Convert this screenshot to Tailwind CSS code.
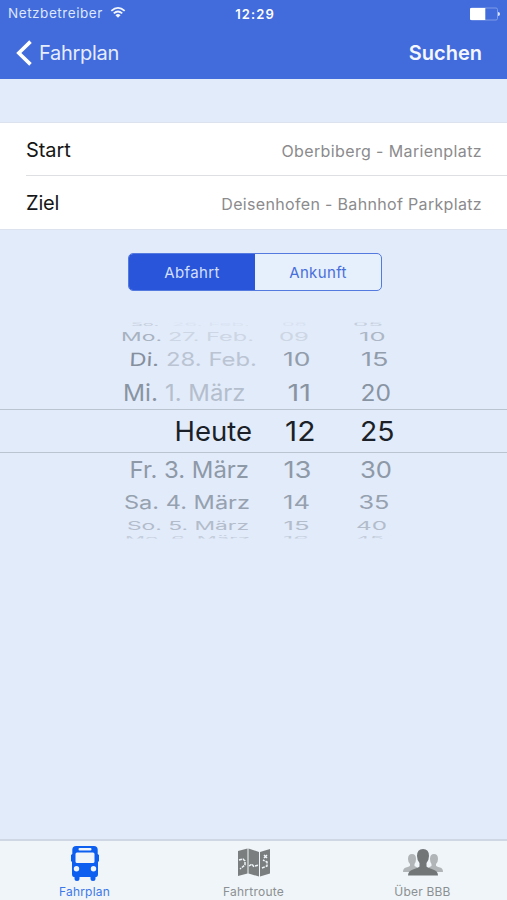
<!DOCTYPE html>
<html lang="de">
<head>
<meta charset="utf-8">
<title>Fahrplan</title>
<script src="https://cdn.jsdelivr.net/npm/@tailwindcss/browser@4"></script>
</head>
<body class="w-[507px] h-[900px] overflow-hidden bg-[#e2ebfa] font-['Inter','Liberation_Sans',sans-serif]">
<div class="flex h-[900px] flex-col">
  <header class="h-[79px] shrink-0 bg-[#426bdc] text-white">
    <div class="grid h-[28px] grid-cols-3 items-center pl-[8px] pr-[7px] text-[13px] leading-none text-[#dde6fa]">
      <div class="flex items-center gap-[7px]">
        <span class="whitespace-nowrap text-[13.5px] tracking-[0.55px]">Netzbetreiber</span>
        <svg class="-mt-[3px] shrink-0" width="16" height="13" viewBox="0 0 17 13" fill="none" stroke="#f2f6ff" stroke-width="1.9"><path d="M1.4 4.8Q8.5-1.6 15.6 4.8M4 7.5Q8.5 3.4 13 7.5"/><path d="M8.5 12 5.8 9.3Q8.5 7 11.2 9.3Z" fill="#f2f6ff" stroke="none"/></svg>
      </div>
      <div class="pl-[2px] text-center font-semibold tracking-[1.1px] text-white">12:29</div>
      <svg class="-mt-[1px] justify-self-end" width="30" height="14" viewBox="0 0 30 14"><rect x=".5" y="1" width="27" height="12" rx="1.5" fill="none" stroke="#7f9ce8"/><path d="M0 1.8Q0 1 1 1H15.3V13H1Q0 13 0 12Z" fill="#fff"/><path d="M28 5Q30 5 30 7T28 9Z" fill="#dce6ff"/></svg>
    </div>
    <div class="flex h-[49px] items-center justify-between pl-[16px] pr-[25px] text-[20px] leading-none">
      <div class="flex items-center gap-[7px]">
        <svg width="16" height="26" viewBox="0 0 16 26" fill="none" stroke="#fff" stroke-width="3.6"><path d="M14.5 1.6 2.8 13 14.5 24.4"/></svg>
        <span class="tracking-[-0.3px] text-[#e6edfd]">Fahrplan</span>
      </div>
      <span class="font-semibold tracking-[0px] text-[#f4f7ff]">Suchen</span>
    </div>
  </header>

  <main class="flex flex-1 flex-col">
    <section class="mt-[43px] h-[108px] border-y border-[#dce3ee] bg-white pl-[26px]">
      <div class="flex h-[53px] items-center justify-between border-b border-[#dedfe3] pr-[25px]">
        <span class="pt-[1px] text-[20px] tracking-[-0.05px] text-[#161616]">Start</span>
        <span class="pt-[3px] text-[16px] tracking-[0.38px] text-[#8b8b8d]">Oberbiberg - Marienplatz</span>
      </div>
      <div class="flex h-[53px] items-center justify-between pr-[25px]">
        <span class="pt-[1px] text-[20px] tracking-[-0.2px] text-[#161616]">Ziel</span>
        <span class="pt-[3px] text-[16px] tracking-[0.33px] text-[#8b8b8d]">Deisenhofen - Bahnhof Parkplatz</span>
      </div>
    </section>

    <div class="ml-[128px] mt-[23px] grid h-[38px] w-[254px] grid-cols-2 overflow-hidden rounded-[5px] border border-[#5479df] bg-[#e6effc] text-center text-[15px] leading-[37px] tracking-[0.35px]">
      <span class="bg-[#2855da] text-[#d3dffb]">Abfahrt</span>
      <span class="text-[#4870da]">Ankunft</span>
    </div>

    <svg class="mt-[19px] block" width="507" height="240" viewBox="0 310 507 240" font-size="27" fill="#8c97a5">
      <defs>
        <clipPath id="wheelTop"><rect x="0" y="322.5" width="507" height="8"/></clipPath>
        <clipPath id="wheelBottom"><rect x="0" y="530" width="507" height="8.5"/></clipPath>
      </defs>
      <g clip-path="url(#wheelTop)" fill="#c5cfdd">
        <text transform="translate(131 325.5) scale(1 .2)" textLength="28" lengthAdjust="spacingAndGlyphs">So.</text>
        <text transform="translate(172 325.5) scale(1 .2)" textLength="78" lengthAdjust="spacingAndGlyphs" opacity=".3">26. Feb.</text>
        <text transform="translate(282 325.5) scale(1 .2)" textLength="25" lengthAdjust="spacingAndGlyphs" opacity=".35">08</text>
        <text transform="translate(353 326) scale(1 .2)" textLength="30" lengthAdjust="spacingAndGlyphs">05</text>
      </g>
      <g fill="#cdd6e4">
        <text transform="translate(121 340.5) scale(1 .41)" textLength="41" lengthAdjust="spacingAndGlyphs" fill="#a8b2c0">Mo.</text>
        <text transform="translate(168 340.5) scale(1 .41)" textLength="86" lengthAdjust="spacingAndGlyphs">27. Feb.</text>
        <text transform="translate(279 340.5) scale(1 .41)" textLength="30" lengthAdjust="spacingAndGlyphs">09</text>
        <text transform="translate(359 340.5) scale(1 .41)" textLength="26.500" lengthAdjust="spacingAndGlyphs" fill="#adb7c5">10</text>
      </g>
      <g fill="#929dab">
        <text transform="translate(129 366) skewX(-3) scale(1 .68)" textLength="30" lengthAdjust="spacingAndGlyphs" fill="#858f9d">Di.</text>
        <text transform="translate(166 366) scale(1 .68)" textLength="91" lengthAdjust="spacingAndGlyphs" fill="#bac4d2">28. Feb.</text>
        <text transform="translate(283 366) scale(1 .68)" textLength="27.500" lengthAdjust="spacingAndGlyphs">10</text>
        <text transform="translate(361 366) scale(1 .68)" textLength="27.500" lengthAdjust="spacingAndGlyphs">15</text>
      </g>
      <g fill="#8994a2">
        <text transform="translate(123 401) scale(1 .84)" textLength="35" lengthAdjust="spacingAndGlyphs">Mi.</text>
        <text transform="translate(165 401) scale(1 .84)" textLength="80.500" lengthAdjust="spacingAndGlyphs" fill="#b4becc">1. März</text>
        <text transform="translate(287.500 401) scale(1 .84)" textLength="23.500" lengthAdjust="spacingAndGlyphs">11</text>
        <text transform="translate(360.5 401) scale(1 .84)" textLength="30.500" lengthAdjust="spacingAndGlyphs">20</text>
      </g>
      <path d="M0 409.5H507M0 452.5H507" stroke="#bac3d0"/>
      <g fill="#1a1f28">
        <text transform="translate(174.5 440.5)" textLength="77.500" lengthAdjust="spacingAndGlyphs">Heute</text>
        <text transform="translate(285 440.5)" textLength="30.500" lengthAdjust="spacingAndGlyphs">12</text>
        <text transform="translate(360 440.5)" textLength="34.500" lengthAdjust="spacingAndGlyphs">25</text>
      </g>
      <g fill="#8e99a7">
        <text transform="translate(129.500 478) scale(1 .86)" textLength="119.500" lengthAdjust="spacingAndGlyphs">Fr. 3. März</text>
        <text transform="translate(283.500 478) scale(1 .86)" textLength="28" lengthAdjust="spacingAndGlyphs">13</text>
        <text transform="translate(360 478) scale(1 .86)" textLength="32" lengthAdjust="spacingAndGlyphs">30</text>
      </g>
      <g fill="#96a1af">
        <text transform="translate(124 509) scale(1 .68)" textLength="126" lengthAdjust="spacingAndGlyphs">Sa. 4. März</text>
        <text transform="translate(283 509) scale(1 .68)" textLength="27" lengthAdjust="spacingAndGlyphs">14</text>
        <text transform="translate(358.500 509) scale(1 .68)" textLength="31" lengthAdjust="spacingAndGlyphs">35</text>
      </g>
      <g fill="#b2bcca">
        <text transform="translate(127 529.7) scale(1 .42)" textLength="122" lengthAdjust="spacingAndGlyphs">So. 5. März</text>
        <text transform="translate(283.500 529.700) scale(1 .42)" textLength="26" lengthAdjust="spacingAndGlyphs">15</text>
        <text transform="translate(356 529.700) scale(1 .42)" textLength="31" lengthAdjust="spacingAndGlyphs">40</text>
      </g>
      <g fill="#c3cddb" clip-path="url(#wheelBottom)">
        <text transform="translate(125 540.5) scale(1 .22)" textLength="125" lengthAdjust="spacingAndGlyphs">Mo. 6. März</text>
        <text transform="translate(283 540.5) scale(1 .22)" textLength="26" lengthAdjust="spacingAndGlyphs">16</text>
        <text transform="translate(355 540.5) scale(1 .22)" textLength="29" lengthAdjust="spacingAndGlyphs">45</text>
      </g>
    </svg>
  </main>

  <nav class="grid h-[61px] shrink-0 grid-cols-3 border-t-2 border-[#cfd7e5] bg-[#eff5f8] text-center text-[12px] leading-[14px] text-[#8c9092]">
    <div class="flex flex-col items-center pt-[5px] text-[#3d78ea]">
      <svg width="28" height="35" viewBox="0 0 28 35"><path fill="#0d5ff0" fill-rule="evenodd" d="M5 0H23Q26.500 0 26.700 3.500V8L28 9V15L27 16V28Q27 31 25 31H24.500V32.500Q24.500 35 22 35T19.500 32.500V31H8.500V32.500Q8.500 35 6 35T3.500 32.500V31H3Q1 31 1 28V16L0 15V9L1.300 8V3.500Q1.500 0 5 0ZM8.500 2Q7.500 2 7.500 3.200T8.500 4.400H19.500Q20.500 4.400 20.500 3.200T19.500 2ZM6 6.500Q4.500 6.500 4.500 8V15.500Q4.500 17 6 17H22Q23.500 17 23.500 15.500V8Q23.500 6.500 22 6.500ZM5.500 20A2.700 2.700 0 1 0 5.500 25.400 2.700 2.700 0 1 0 5.500 20ZM22.500 20A2.700 2.700 0 1 0 22.500 25.400 2.700 2.700 0 1 0 22.500 20Z"/></svg>
      <span class="mt-[4px] tracking-[0.2px]">Fahrplan</span>
    </div>
    <div class="flex flex-col items-center pt-[7px]">
      <svg width="34" height="30" viewBox="0 0 34 30"><path fill="#7b7e7f" d="M1 3 10.500 .5V25.500L1 28ZM11.500 .5 22 4V28.500L11.500 25.500ZM23 4 33 1V25.500L23 28.500Z"/><g fill="none" stroke="#eff5f8" stroke-width="1.500"><path d="M2 12 6 11 8 13 8 17 3 21M12 18 15 16 17 19M18 18 22 17M25 20 30 18V14L26 12" stroke-dasharray="3 1"/><path d="M27 7 30 10M30 7 27 10"/></g></svg>
      <span class="mt-[7px] tracking-[0.25px]">Fahrtroute</span>
    </div>
    <div class="flex flex-col items-center pt-[7px]">
      <svg width="40" height="30" viewBox="0 0 40 30"><path fill="#b1b5b7" d="M9 6Q13 6 13 11 13 14 11.500 16V18Q17 20 17 24H0Q0 20 3 19.500 7 18.500 7 17.500V16Q5 14 5 11 5 6 9 6Z"/><path fill="#b1b5b7" d="M31 6Q27 6 27 11 27 14 28.500 16V18Q23 20 23 24H40Q40 20 37 19.500 33 18.500 33 17.500V16Q35 14 35 11 35 6 31 6Z"/><path fill="#737677" d="M20 1Q26 1 26 8 26 12 23.500 15V18.500Q24 19.500 30 21.500 35 23 35 27.500H5Q5 23 10 21.500 16 19.500 16.500 18.500V15Q14 12 14 8 14 1 20 1Z"/></svg>
      <span class="mt-[7px] tracking-[0.2px]">Über BBB</span>
    </div>
  </nav>
</div>
</body>
</html>
